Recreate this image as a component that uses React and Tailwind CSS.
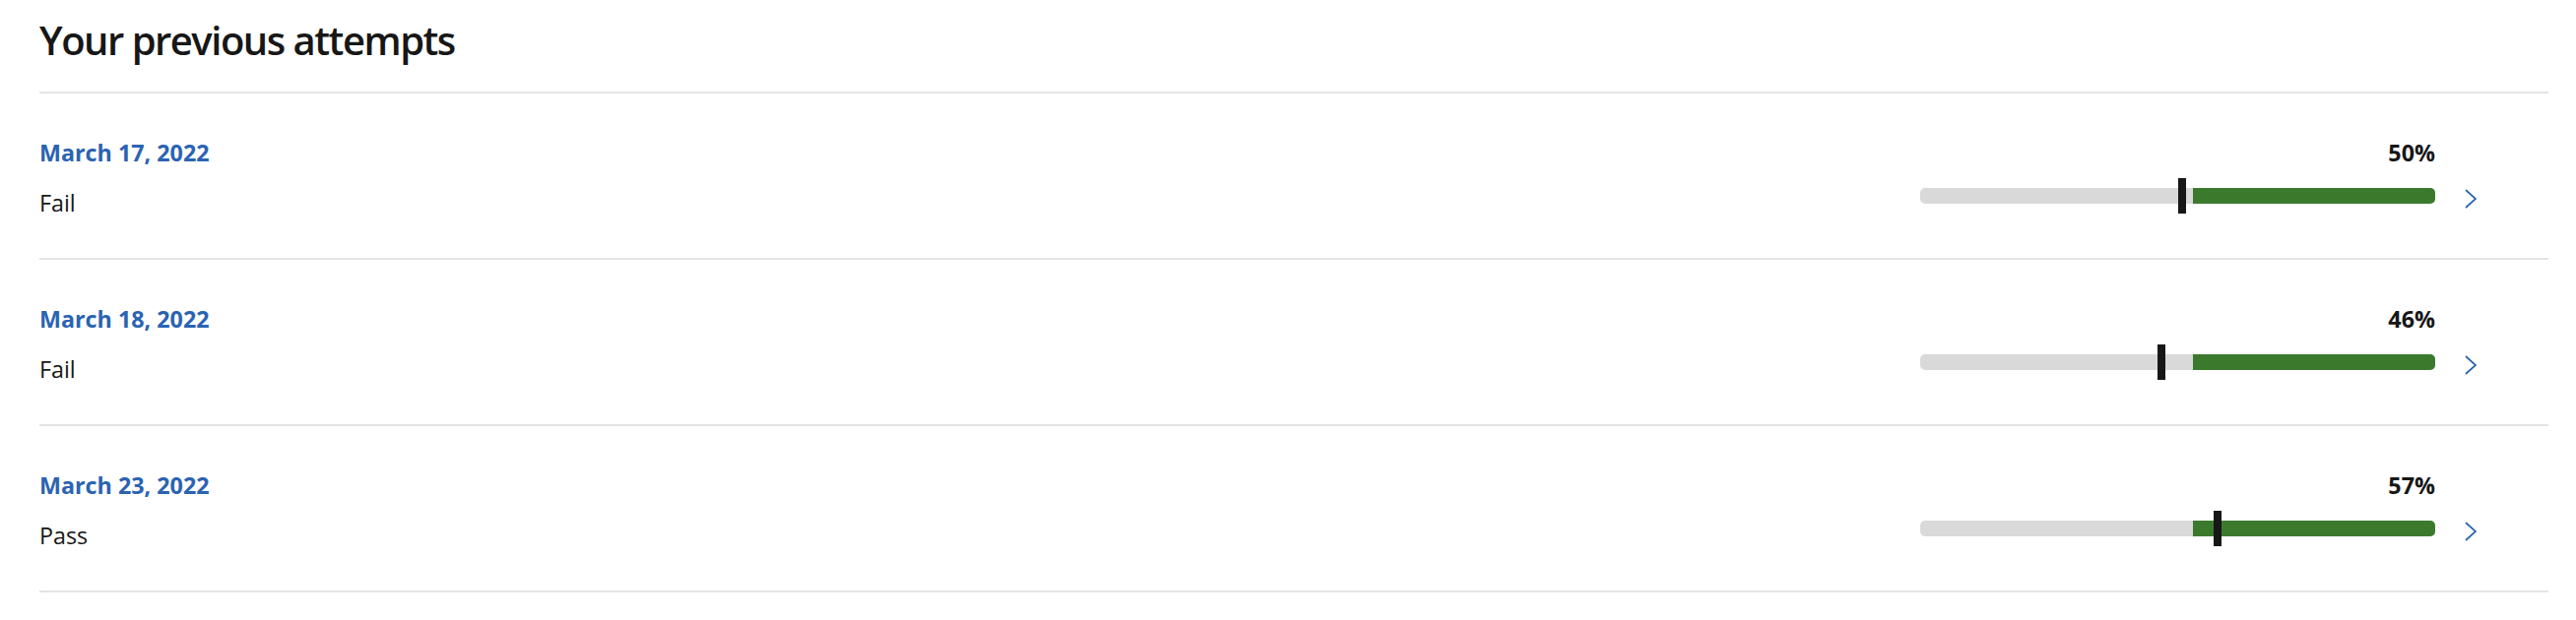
import { useState } from 'react';

const attempts = [
  { date: 'March 17, 2022', result: 'Fail', score: 50 },
  { date: 'March 18, 2022', result: 'Fail', score: 46 },
  { date: 'March 23, 2022', result: 'Pass', score: 57 },
];

// passing range starts here on the bar
const PASS_AT = 53;

function ScoreBar({ score }) {
  return (
    <div className="relative h-[16px] w-[523px] rounded-[5px] bg-[#d9d9d9]">
      <div
        className="absolute top-0 right-0 h-full rounded-r-[5px] bg-[#3b7a2d]"
        style={{ left: `${PASS_AT}%` }}
      />
      <div
        className="absolute top-[-10px] h-[36px] w-[8px] bg-[#171717]"
        style={{ left: `${score}%` }}
      />
    </div>
  );
}

function Chevron() {
  return (
    <svg width="12" height="20" viewBox="0 0 12 20" fill="none" className="translate-y-[3px]">
      <path d="M1 1 L11 10 L1 19" stroke="#2b63b2" strokeWidth="1.7" />
    </svg>
  );
}

function AttemptRow({ attempt }) {
  return (
    <div className="flex items-start justify-between border-t-2 border-[#e4e4e4] pt-[44px] pb-[40px] pr-[73px]">
      <div className="flex flex-col gap-[19px] text-[23.3px] leading-[32px]">
        <a href="#" className="font-bold text-[#2b63b2]">{attempt.date}</a>
        <span className="text-[#171717]">{attempt.result}</span>
      </div>
      <div className="flex items-end gap-[30px]">
        <div className="flex flex-col items-end">
          <span className="text-[23.3px] leading-[32px] font-bold text-[#171717]">{attempt.score}%</span>
          <div className="mt-[20px]">
            <ScoreBar score={attempt.score} />
          </div>
        </div>
        <div className="flex h-[16px] items-center">
          <Chevron />
        </div>
      </div>
    </div>
  );
}

export default function App() {
  const [items] = useState(attempts);
  return (
    <main className="min-h-screen bg-white pl-[40px] pr-[28px] pt-[15px] font-['Open_Sans','Noto_Sans',sans-serif] text-[#171717]">
      <h1 className="text-[40px] leading-[52px] font-semibold tracking-[-1.5px] mb-[26px]">Your previous attempts</h1>
      <div className="border-b-2 border-[#e4e4e4]">
        {items.map(a => (
          <AttemptRow key={a.date} attempt={a} />
        ))}
      </div>
    </main>
  );
}
